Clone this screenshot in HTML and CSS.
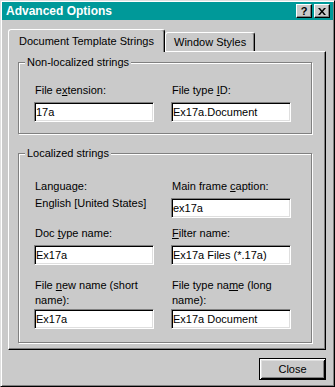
FILE: index.html
```html
<!DOCTYPE html>
<html lang="en">
<head>
    <meta charset="UTF-8">
    <title>Advanced Options</title>
    <link rel="stylesheet" href="styles.css">
</head>
<body>
    <div class="window">
        <div class="titlebar">
            <span class="title">Advanced Options</span>
            <div class="caption-buttons">
                <span class="caption-btn help">?</span>
                <span class="caption-btn">
                    <svg width="8" height="7" viewBox="0 0 8 7"><path d="M0 0h2l2 2.4L6 0h2L5 3.5 8 7H6L4 4.6 2 7H0l3-3.5z" fill="#000"/></svg>
                </span>
            </div>
        </div>
        <div class="dialog">
            <div class="tabs">
                <div class="tab active">Document Template Strings</div>
                <div class="tab inactive">Window Styles</div>
            </div>
            <div class="panel">
                <div class="group group-top">
                    <div class="group-title">Non-localized strings</div>
                    <div class="fields">
                        <div class="field">
                            <label>File e<u>x</u>tension:</label>
                            <input type="text" value="17a">
                        </div>
                        <div class="field">
                            <label>File type <u>I</u>D:</label>
                            <input type="text" value="Ex17a.Document">
                        </div>
                    </div>
                </div>
                <div class="group group-bottom">
                    <div class="group-title">Localized strings</div>
                    <div class="fields">
                        <div class="field">
                            <label>Language:</label>
                            <div class="static">English [United States]</div>
                        </div>
                        <div class="field">
                            <label>Main frame <u>c</u>aption:</label>
                            <input type="text" value="ex17a">
                        </div>
                        <div class="field row2">
                            <label>Doc <u>t</u>ype name:</label>
                            <input type="text" value="Ex17a">
                        </div>
                        <div class="field row2">
                            <label><u>F</u>ilter name:</label>
                            <input type="text" value="Ex17a Files (*.17a)">
                        </div>
                        <div class="field row3">
                            <label>File <u>n</u>ew name (short<br>name):</label>
                            <input type="text" value="Ex17a">
                        </div>
                        <div class="field row3">
                            <label>File type na<u>m</u>e (long<br>name):</label>
                            <input type="text" value="Ex17a Document">
                        </div>
                    </div>
                </div>
            </div>
            <div class="footer">
                <button class="btn default">Close</button>
            </div>
        </div>
    </div>
</body>
</html>
```

FILE: styles.css
```css
* {
    box-sizing: border-box;
}
body {
    margin: 0;
    background: #cacaca;
    font-family: "Liberation Sans", Arial, sans-serif;
    font-size: 11px;
    color: #000;
}
.window {
    width: 335px;
    height: 387px;
    background: #cacaca;
    border: 1px solid;
    border-color: #dfdfdf #000 #000 #dfdfdf;
    box-shadow: inset 1px 1px #fff, inset -1px -1px #808080;
    padding: 1px;
    display: flex;
    flex-direction: column;
}
.titlebar {
    height: 18px;
    background: #009999;
    color: #fff;
    display: flex;
    align-items: center;
    justify-content: space-between;
    padding: 0 3px 0 4px;
}
.title {
    font-weight: bold;
    font-size: 12px;
}
.caption-buttons {
    display: flex;
    gap: 2px;
}
.caption-btn {
    width: 16px;
    height: 14px;
    background: #cacaca;
    border: 1px solid;
    border-color: #fff #000 #000 #fff;
    box-shadow: inset -1px -1px #808080;
    display: flex;
    align-items: center;
    justify-content: center;
    color: #000;
}
.caption-btn.help {
    font-weight: bold;
    font-size: 11px;
    line-height: 12px;
}
.dialog {
    flex: 1;
    display: flex;
    flex-direction: column;
    padding: 9px 7px 5px 6px;
}
.tabs {
    display: flex;
    align-items: flex-end;
    position: relative;
    z-index: 1;
}
.tab {
    background: #cacaca;
    border: 1px solid;
    border-bottom: none;
    border-color: #fff #000 #000 #fff;
    box-shadow: inset -1px 0 #808080;
    border-radius: 3px 3px 0 0;
    display: flex;
    align-items: center;
}
.tab.active {
    width: 157px;
    height: 23px;
    margin-bottom: -1px;
    padding-left: 10px;
}
.tab.inactive {
    width: 90px;
    height: 19px;
    padding-left: 8px;
}
.panel {
    height: 299px;
    border: 1px solid;
    border-color: #fff #000 #000 #fff;
    box-shadow: inset -1px -1px #808080;
    padding: 10px 0 0 9px;
}
.group {
    width: 294px;
    border: 1px solid #808080;
    box-shadow: inset 1px 1px #fff, 1px 1px #fff;
}
.group-bottom {
    margin-top: 19px;
}
.group-title {
    width: fit-content;
    margin: -7px 0 0 6px;
    padding: 0 2px;
    background: #cacaca;
    line-height: 13px;
}
.fields {
    display: grid;
    grid-template-columns: 137px 120px;
    padding: 15px 0 11px 15px;
}
.group-bottom .fields {
    padding: 20px 0 13px 15px;
}
.field label {
    display: block;
    line-height: 13px;
    margin-bottom: 5px;
    padding-left: 1px;
}
.field.row2 {
    margin-top: 9px;
}
.field.row3 {
    margin-top: 13px;
}
.field.row3 label {
    line-height: 15px;
    margin-bottom: 1px;
}
.static {
    line-height: 13px;
    padding-left: 1px;
    margin-top: -1px;
}
input {
    display: block;
    width: 120px;
    height: 20px;
    margin: 0;
    padding: 0 1px;
    border: 1px solid;
    border-color: #808080 #fff #fff #808080;
    box-shadow: inset 1px 1px #000, inset -1px -1px #dfdfdf;
    background: #fff;
    font: inherit;
    color: #000;
    outline: none;
}
.footer {
    display: flex;
    justify-content: flex-end;
    margin-top: 8px;
}
.btn {
    width: 67px;
    height: 22px;
    padding: 0;
    background: #cacaca;
    font: inherit;
    color: #000;
    border: 1px solid #000;
    box-shadow: inset 1px 1px #fff, inset -1px -1px #000, inset 2px 2px #dfdfdf, inset -2px -2px #808080;
}
```
